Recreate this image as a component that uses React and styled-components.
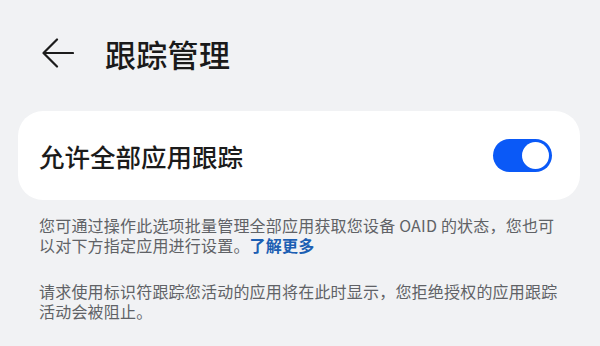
import styled, { createGlobalStyle } from 'styled-components';

const GlobalStyle = createGlobalStyle`
  html, body {
    margin: 0;
    padding: 0;
    background: #f1f2f4;
  }
  body {
    font-family: "Noto Sans CJK SC", "Noto Sans", sans-serif;
  }
`;

const Page = styled.div`
  width: 600px;
  height: 346px;
  background: #f1f2f4;
  overflow: hidden;
`;

const Header = styled.div`
  display: flex;
  align-items: center;
  height: 106px;
  padding-left: 42px;
  gap: 31px;
`;

const BackButton = styled.button`
  display: flex;
  align-items: center;
  justify-content: center;
  width: 32px;
  height: 30px;
  padding: 0;
  border: none;
  background: none;
  color: #1c1c1c;
`;

const Title = styled.h1`
  margin: 0;
  font-size: 31px;
  line-height: 1;
  font-weight: 500;
  color: #1a1a1a;
  letter-spacing: 0.3px;
`;

const Card = styled.div`
  display: flex;
  align-items: center;
  justify-content: space-between;
  height: 89px;
  margin: 5px 20px 0 18px;
  padding: 0 28px 0 21px;
  background: #fff;
  border-radius: 25px;
`;

const CardLabel = styled.span`
  font-size: 25.5px;
  line-height: 1;
  font-weight: 500;
  color: #1b1b1b;
`;

const Toggle = styled.div`
  position: relative;
  width: 59px;
  height: 33px;
  border-radius: 17px;
  background: ${p => (p.on ? '#0a59f7' : '#c7c9cc')};
`;

const Knob = styled.div`
  position: absolute;
  top: 3px;
  ${p => (p.on ? 'right: 3px;' : 'left: 3px;')}
  width: 27px;
  height: 27px;
  border-radius: 50%;
  background: #fff;
`;

const Notes = styled.div`
  padding: 15px 37px 0 39px;
`;

const Note = styled.p`
  margin: 0;
  margin-top: ${p => p.gap || '0'};
  font-size: 16px;
  line-height: 20px;
  letter-spacing: 0.2px;
  color: #606266;
`;

const Link = styled.a`
  color: #1c5fb3;
  font-weight: 700;
  text-decoration: none;
`;

function BackArrow() {
  return (
    <svg width="32" height="30" viewBox="0 0 32 30" fill="none">
      <path
        d="M31 15H2M15 1.5L1.5 15L15 28.5"
        stroke="currentColor"
        strokeWidth="2.2"
        strokeLinecap="round"
        strokeLinejoin="round"
      />
    </svg>
  );
}

export default function App() {
  return (
    <Page>
      <GlobalStyle />
      <Header>
        <BackButton aria-label="返回">
          <BackArrow />
        </BackButton>
        <Title>跟踪管理</Title>
      </Header>
      <Card>
        <CardLabel>允许全部应用跟踪</CardLabel>
        <Toggle on>
          <Knob on />
        </Toggle>
      </Card>
      <Notes>
        <Note>
          您可通过操作此选项批量管理全部应用获取您设备 OAID 的状态，您也可以对下方指定应用进行设置。<Link href="#">了解更多</Link>
        </Note>
        <Note gap="26px">
          请求使用标识符跟踪您活动的应用将在此时显示，您拒绝授权的应用跟踪活动会被阻止。
        </Note>
      </Notes>
    </Page>
  );
}
